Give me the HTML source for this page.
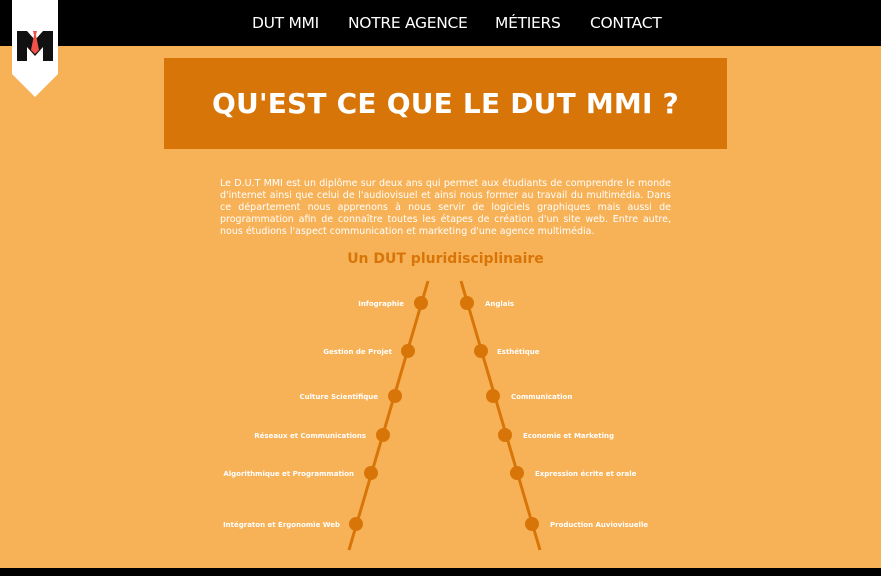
<!DOCTYPE html>
<html><head><meta charset="utf-8"><style>
*{margin:0;padding:0;box-sizing:border-box}
body{width:881px;height:576px;overflow:hidden;background:#f7b257;font-family:"DejaVu Sans","Liberation Sans",sans-serif;position:relative}
.nav{position:absolute;left:0;top:0;width:881px;height:46px;background:#000}
.nav a{position:absolute;top:14px;color:#fff;font-size:15.5px;font-family:"DejaVu Sans",sans-serif;text-decoration:none;letter-spacing:-0.3px}
.logo{position:absolute;left:12px;top:0}
.box{position:absolute;left:164px;top:58px;width:563px;height:91px;background:#d87508;color:#fff;font-weight:bold;font-size:28px;text-align:center;line-height:91px;letter-spacing:0.2px}
.txt{position:absolute;left:220px;top:178px;width:451px;color:#fff;font-size:9.5px;line-height:12px}
.txt div{white-space:nowrap;text-align:justify;text-align-last:justify}
.txt div.e{text-align-last:left}
h2{position:absolute;left:0;width:881px;top:251px;text-align:center;color:#d87508;font-size:14px;font-weight:bold;padding-left:10px}
.foot{position:absolute;left:0;top:568px;width:881px;height:8px;background:#000}
</style></head><body>
<div class="nav">
<a style="left:252px">DUT MMI</a><a style="left:348px">NOTRE AGENCE</a><a style="left:495px">MÉTIERS</a><a style="left:590px">CONTACT</a>
</div>
<svg class="logo" width="46" height="98" viewBox="0 0 46 98"><polygon points="0,0 46,0 46,74 23,97 0,74" fill="#fff"/>
<path d="M5,31 L15,31 L23,40 L31,31 L41,31 L41,61 L31,61 L31,47 L23,56 L15,47 L15,61 L5,61Z" fill="#111"/>
<path d="M21,31 L25,31 L24,35 L27,50 L23,54 L19,50 L22,35Z" fill="#f0524a"/></svg>
<div class="box">QU'EST CE QUE LE DUT MMI ?</div>
<div class="txt"><div>Le D.U.T MMI est un diplôme sur deux ans qui permet aux étudiants de comprendre le monde</div><div>d'internet ainsi que celui de l'audiovisuel et ainsi nous former au travail du multimédia. Dans</div><div>ce département nous apprenons à nous servir de logiciels graphiques mais aussi de</div><div>programmation afin de connaître toutes les étapes de création d'un site web. Entre autre,</div><div class="e">nous étudions l'aspect communication et marketing d'une agence multimédia.</div></div>
<h2>Un DUT pluridisciplinaire</h2>
<svg style="position:absolute;left:0;top:0" width="881" height="576">
<g stroke="#d87508" stroke-width="3"><line x1="428" y1="281" x2="349" y2="550"/><line x1="461" y1="281" x2="540" y2="550"/></g>
<g fill="#d87508">
<circle cx="421" cy="303" r="7"/><circle cx="408" cy="351" r="7"/><circle cx="395" cy="396" r="7"/><circle cx="383" cy="435" r="7"/><circle cx="371" cy="473" r="7"/><circle cx="356" cy="524" r="7"/>
<circle cx="467" cy="303" r="7"/><circle cx="481" cy="351" r="7"/><circle cx="493" cy="396" r="7"/><circle cx="505" cy="435" r="7"/><circle cx="517" cy="473" r="7"/><circle cx="532" cy="524" r="7"/>
</g>
<g fill="#fff" font-family="DejaVu Sans,sans-serif" font-size="7" font-weight="bold">
<g text-anchor="end">
<text x="404" y="306">Infographie</text><text x="392" y="354">Gestion de Projet</text><text x="378" y="399">Culture Scientifique</text><text x="366" y="438">Réseaux et Communications</text><text x="354" y="476">Algorithmique et Programmation</text><text x="340" y="527">Intégraton et Ergonomie Web</text>
</g>
<text x="485" y="306">Anglais</text><text x="497" y="354">Esthétique</text><text x="511" y="399">Communication</text><text x="523" y="438">Economie et Marketing</text><text x="535" y="476">Expression écrite et orale</text><text x="550" y="527">Production Auviovisuelle</text>
</g>
</svg>
<div class="foot"></div>
</body></html>
